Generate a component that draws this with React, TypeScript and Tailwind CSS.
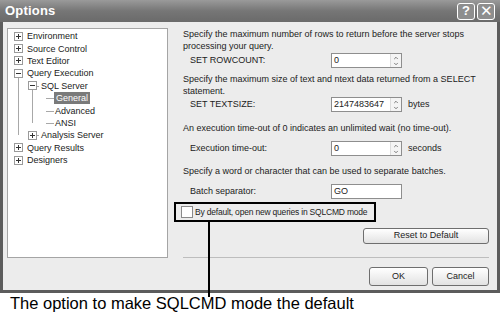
import { ChevronUp, ChevronDown } from 'lucide-react';

interface TreeNode {
  label: string;
  level: number;
  expander?: '+' | '-';
  selected?: boolean;
  // which guide columns carry a vertical line through this row
  guides: number[];
  // last child: elbow only reaches the middle
  last?: boolean;
}

const treeNodes: TreeNode[] = [
  { label: 'Environment', level: 0, expander: '+', guides: [] },
  { label: 'Source Control', level: 0, expander: '+', guides: [] },
  { label: 'Text Editor', level: 0, expander: '+', guides: [] },
  { label: 'Query Execution', level: 0, expander: '-', guides: [] },
  { label: 'SQL Server', level: 1, expander: '-', guides: [0] },
  { label: 'General', level: 2, selected: true, guides: [0, 1] },
  { label: 'Advanced', level: 2, guides: [0, 1] },
  { label: 'ANSI', level: 2, guides: [0, 1], last: true },
  { label: 'Analysis Server', level: 1, expander: '+', guides: [0], last: true },
  { label: 'Query Results', level: 0, expander: '+', guides: [] },
  { label: 'Designers', level: 0, expander: '+', guides: [] },
];

function Expander({ sign }: { sign: '+' | '-' }) {
  return (
    <div className="relative z-10 w-[9px] h-[9px] border border-[#9a9a9a] bg-white flex items-center justify-center">
      <div className="absolute w-[5px] h-px bg-[#333]" />
      {sign === '+' && <div className="absolute w-px h-[5px] bg-[#333]" />}
    </div>
  );
}

function TreeRow({ node }: { node: TreeNode }) {
  const cells = [];
  for (let i = 0; i < node.level; i++) {
    const isOwn = i === node.level - 1;
    const hasLine = node.guides.includes(i);
    cells.push(
      <div key={i} className="relative w-[14px] h-full shrink-0">
        {hasLine && (
          <div
            className={`absolute left-[7px] top-0 w-px bg-[#a8a8a8] ${
              isOwn && node.last ? 'h-1/2' : 'h-full'
            }`}
          />
        )}
      </div>
    );
  }
  return (
    <div className="flex items-center h-[12.4px]">
      {cells}
      <div className="relative w-[14px] h-full shrink-0 flex items-center justify-center">
        {node.level > 0 && !node.expander && (
          <div className="absolute left-[7px] top-1/2 w-[8px] h-px bg-[#a8a8a8]" />
        )}
        {node.level > 0 && node.expander && (
          <div className="absolute left-[7px] top-1/2 w-[7px] h-px bg-[#a8a8a8]" />
        )}
        {node.expander === '-' && (
          <div className="absolute left-[7px] top-1/2 w-px h-[8px] bg-[#a8a8a8]" />
        )}
        {node.expander && <Expander sign={node.expander} />}
      </div>
      <span
        className={`ml-[1px] leading-[12px] whitespace-nowrap shrink-0 ${
          node.selected ? 'bg-[#7a7a7a] text-white px-[2px]' : 'text-[#222] px-[1px]'
        }`}
      >
        {node.label}
      </span>
    </div>
  );
}

function SpinInput({ value, spin = true }: { value: string; spin?: boolean }) {
  return (
    <div className="w-[71px] h-[15px] border border-[#8e8e8e] bg-white flex items-center">
      <span className="flex-1 pl-[2px] leading-[13px] text-[#222]">{value}</span>
      {spin && (
        <div className="w-[11px] h-full flex flex-col items-center justify-center border-l border-[#dcdcdc] bg-[#f4f4f4] text-[#555]">
          <ChevronUp className="w-[8px] h-[6px]" strokeWidth={3} />
          <ChevronDown className="w-[8px] h-[6px]" strokeWidth={3} />
        </div>
      )}
    </div>
  );
}

function FieldRow({ label, value, unit, spin }: { label: string; value: string; unit?: string; spin?: boolean }) {
  return (
    <div className="flex items-center h-[15px]">
      <span className="w-[148px] pl-[7px] text-[#222]">{label}</span>
      <SpinInput value={value} spin={spin} />
      {unit && <span className="ml-[6px] text-[#222]">{unit}</span>}
    </div>
  );
}

function XpButton({ children, className }: { children: React.ReactNode; className: string }) {
  return (
    <div
      className={`flex items-center justify-center rounded-[3px] border border-[#6e6e6e] bg-gradient-to-b from-white to-[#e2e2e2] text-[#222] ${className}`}
    >
      {children}
    </div>
  );
}

export default function App() {
  return (
    <div
      className="relative w-[500px] h-[316px] bg-white overflow-hidden text-[9px]"
      style={{ fontFamily: '"Liberation Sans", Arial, sans-serif' }}
    >
      <div className="h-[293px] flex flex-col border-x-[3px] border-b-[3px] border-[#5c5c5c] bg-[#ececec]">
        {/* title bar */}
        <div className="h-[22px] shrink-0 -mx-[3px] flex items-center justify-between px-[5px] bg-gradient-to-b from-[#9a9a9a] via-[#767676] to-[#6a6a6a]">
          <span className="text-white font-bold text-[13px] tracking-[0.2px]">Options</span>
          <div className="flex gap-[2px]">
            <div className="w-[18px] h-[17px] rounded-[3px] border border-white bg-[#8e8e8e] flex items-center justify-center text-white font-bold text-[13px]">
              ?
            </div>
            <div className="w-[18px] h-[17px] rounded-[3px] border border-white bg-[#8e8e8e] flex items-center justify-center text-white text-[15px]">
              ✕
            </div>
          </div>
        </div>

        <div className="flex flex-1 min-h-0">
          {/* tree */}
          <div className="ml-[4px] mt-[6px] w-[161px] h-[230px] border border-[#a5a5a5] bg-white pt-[1px] pl-[3px]">
            {treeNodes.map((n) => (
              <TreeRow key={n.label} node={n} />
            ))}
          </div>

          {/* right side */}
          <div className="ml-[15px] w-[306px] flex flex-col">
            <p className="mt-[6px] leading-[12px] text-[#222]">
              Specify the maximum number of rows to return before the server stops processing your query.
            </p>
            <div className="mt-[1px]">
              <FieldRow label="SET ROWCOUNT:" value="0" />
            </div>
            <p className="mt-[5px] leading-[12px] text-[#222]">
              Specify the maximum size of text and ntext data returned from a SELECT statement.
            </p>
            <FieldRow label="SET TEXTSIZE:" value="2147483647" unit="bytes" />
            <p className="mt-[10px] leading-[12px] text-[#222]">
              An execution time-out of 0 indicates an unlimited wait (no time-out).
            </p>
            <div className="mt-[7px]">
              <FieldRow label="Execution time-out:" value="0" unit="seconds" />
            </div>
            <p className="mt-[9px] leading-[12px] text-[#222]">
              Specify a word or character that can be used to separate batches.
            </p>
            <div className="mt-[7px]">
              <FieldRow label="Batch separator:" value="GO" spin={false} />
            </div>

            {/* highlighted option */}
            <div className="-ml-[9px] mt-[3px] w-[202px] h-[20px] shrink-0 border-2 border-black flex items-center pl-[5px]">
              <div className="w-[12px] h-[12px] shrink-0 border border-[#8a8a8a] bg-white" />
              <span className="ml-[2px] whitespace-nowrap text-[8.5px] tracking-[-0.2px] text-[#222]">
                By default, open new queries in SQLCMD mode
              </span>
            </div>

            <div className="mt-[6px] flex justify-end">
              <XpButton className="w-[126px] h-[16px]">Reset to Default</XpButton>
            </div>

            <div className="mt-[13px] h-px shrink-0 bg-[#bdbdbd]" />

            <div className="mt-[9px] flex justify-end gap-[4px]">
              <XpButton className="w-[59px] h-[19px]">OK</XpButton>
              <XpButton className="w-[57px] h-[19px]">Cancel</XpButton>
            </div>
          </div>
        </div>
      </div>

      {/* callout line from the boxed option to the caption */}
      <div className="absolute left-[208px] top-[222px] w-[2px] h-[75px] bg-black" />

      <div className="pl-[10px] text-[16.5px] leading-[20px] text-black">
        The option to make SQLCMD mode the default
      </div>
    </div>
  );
}
